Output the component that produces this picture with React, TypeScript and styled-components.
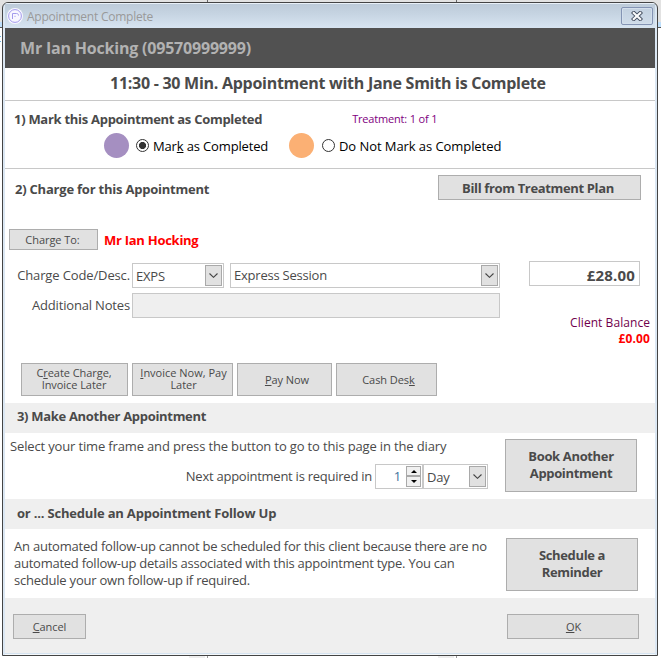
import React from "react";
import styled, { createGlobalStyle, css } from "styled-components";

const GlobalStyle = createGlobalStyle`
  * { box-sizing: border-box; }
  body { margin: 0; background: #fff; overflow: hidden; }
  button, input { font: inherit; color: inherit; letter-spacing: inherit; }
`;

const ink = "#4a4a4a";

/* Grid of the diary page that shows around the dialog's edges */
const Desktop = styled.div`
  width: 661px;
  height: 658px;
  padding: 2px 3px 2px 2px;
  font: 13px/17px "Open Sans", "Noto Sans", sans-serif;
  letter-spacing: -0.22px;
  color: ${ink};
  background:
    linear-gradient(#666, #666) 207px 0 / 1px 2px no-repeat,
    linear-gradient(#666, #666) 456px 0 / 1px 2px no-repeat,
    linear-gradient(#999, #999) 207px 656px / 1px 2px no-repeat,
    linear-gradient(#999, #999) 456px 656px / 1px 2px no-repeat,
    linear-gradient(#eee, #eee) 189px 656px / 16px 2px no-repeat,
    linear-gradient(#eee, #eee) 438px 656px / 16px 2px no-repeat,
    linear-gradient(#6cb8e6, #6cb8e6) 0 36px / 1px 1px no-repeat,
    linear-gradient(#6cb8e6, #6cb8e6) 0 41px / 1px 1px no-repeat,
    linear-gradient(#e2e2e2 0 22px, #bfdffb 22px 27px, #555 27px 28px, #fff 28px);
`;

const Dialog = styled.section`
  display: flex;
  flex-direction: column;
  height: 654px;
  padding: 0 2px 2px;
  border: 1px solid #444;
  border-radius: 6px 6px 0 0;
  background: #dbe7f3;
  overflow: hidden;
`;

const TitleBar = styled.header`
  display: flex;
  align-items: center;
  height: 25px;
  flex: none;
  padding: 0 2px 0 2px;
  background: linear-gradient(#e8f0f8 0 1px, #bdcbd9 1px, #c5d3e1 40%, #d7e4f1);
  font-size: 12px;
  letter-spacing: -0.24px;
  color: #999;
`;

const TitleText = styled.span`
  flex: 1;
  margin: 1px 0 0 4px;
`;

const CloseButton = styled.button`
  display: grid;
  place-items: center;
  width: 32px;
  height: 18px;
  margin: 1px 0 0;
  padding: 0 1px 1px 0;
  border: 1px solid #8494b4;
  border-radius: 2px;
  background: linear-gradient(#c3d1e0, #cfdcea);
  box-shadow: inset 0 0 0 1px #d3dfec;
`;

const ClientBanner = styled.div`
  height: 40px;
  flex: none;
  padding: 10px 15px;
  background: #515151;
  color: #b2b2b2;
  font-size: 16px;
  font-weight: 700;
  line-height: 20px;
  letter-spacing: -0.2px;
`;

const Headline = styled.h1`
  height: 33px;
  flex: none;
  margin: 0;
  padding: 5px 0 0 105px;
  border-bottom: 1px solid #c8c8c8;
  background: #fff;
  font-size: 16px;
  line-height: 20px;
  letter-spacing: -0.27px;
`;

const Panel = styled.div<{ $h: number; $line?: boolean }>`
  height: ${(p) => p.$h}px;
  flex: none;
  background: #fff;
  ${(p) => p.$line && css`border-bottom: 1px solid #c8c8c8;`}
`;

const SectionTitle = styled.h2<{ $track?: number }>`
  margin: 0;
  font-size: 13px;
  line-height: 17px;
  letter-spacing: ${(p) => p.$track ?? -0.24}px;
`;

const Band = styled.div<{ $top?: number }>`
  height: 30px;
  flex: none;
  padding: ${(p) => p.$top ?? 5}px 12px 0;
  background: #efefef;
`;

const Row = styled.div<{ $h: number; $x: number; $top?: number; $gap?: number }>`
  display: flex;
  height: ${(p) => p.$h}px;
  margin-top: ${(p) => p.$top ?? 0}px;
  padding-left: ${(p) => p.$x}px;
  gap: ${(p) => p.$gap ?? 0}px;
`;

const Treatment = styled.div`
  margin-left: 90px;
  color: #800080;
  font-size: 11px;
  line-height: 17px;
  letter-spacing: -0.18px;
`;

const Swatch = styled.span<{ $color: string }>`
  width: 25px;
  height: 25px;
  margin-right: 7px;
  border-radius: 50%;
  background: ${(p) => p.$color};
`;

const Choice = styled.label<{ $w: number; $x?: number }>`
  display: flex;
  align-items: center;
  gap: 4px;
  width: ${(p) => p.$w}px;
  padding-left: ${(p) => p.$x ?? 0}px;
  color: #000;
  letter-spacing: -0.15px;
  white-space: nowrap;
  span { padding-top: 1px; }
`;

const Radio = styled.input`
  appearance: none;
  flex: none;
  width: 13px;
  height: 13px;
  margin: 0;
  border: 1px solid #333;
  border-radius: 50%;
  background: #fff;
  &:checked {
    background: radial-gradient(circle at center, #333 0 3.2px, #fff 3.9px);
  }
`;

const Button = styled.button<{ $w: number; $h: number; $strong?: boolean; $shift?: string }>`
  flex: none;
  width: ${(p) => p.$w}px;
  height: ${(p) => p.$h}px;
  padding: ${(p) => p.$shift ?? "0"};
  border: 1px solid #adadad;
  background: #e1e1e1;
  color: ${ink};
  text-align: center;
  font-size: 11px;
  line-height: 12px;
  letter-spacing: -0.06px;
  ${(p) =>
    p.$strong &&
    css`
      font-size: 13px;
      line-height: 17px;
      font-weight: 700;
      letter-spacing: -0.35px;
    `}
`;

const Key = styled.span`
  text-decoration: underline;
  text-decoration-thickness: 1px;
  text-underline-offset: 1px;
`;

const Payer = styled.strong`
  margin: 3px 0 0 6px;
  color: #f00;
  letter-spacing: -0.27px;
`;

const FieldLabel = styled.label<{ $w: number; $top: number; $gap?: number }>`
  width: ${(p) => p.$w}px;
  padding: ${(p) => p.$top}px ${(p) => p.$gap ?? 2}px 0 0;
  text-align: right;
  white-space: nowrap;
`;

const Field = styled.div<{ $w: number; $muted?: boolean }>`
  display: flex;
  flex: none;
  width: ${(p) => p.$w}px;
  height: 25px;
  padding: 1px;
  border: 1px solid #c8c8c8;
  background: ${(p) => (p.$muted ? "#efefef" : "#fff")};
`;

const Value = styled.span<{ $top: number; $x?: number }>`
  flex: 1;
  padding: ${(p) => p.$top}px 0 0 ${(p) => p.$x ?? 2}px;
`;

const Drop = styled.button`
  display: grid;
  place-items: center;
  flex: none;
  width: 17px;
  height: 21px;
  padding: 0;
  border: 1px solid #a9a9a9;
  background: #e1e1e1;
`;

const Amount = styled.div`
  width: 111px;
  height: 25px;
  margin: -2px 0 0 29px;
  padding: 3px 4px 0 0;
  border: 1px solid #c8c8c8;
  text-align: right;
  font-size: 15px;
  line-height: 20px;
  font-weight: 700;
  letter-spacing: 0.2px;
`;

const Balance = styled.div`
  margin: 2px 5px 0 0;
  color: #70004c;
  text-align: right;
  font-size: 12px;
  line-height: 16px;
  letter-spacing: 0.06px;
  strong {
    display: block;
    color: #f00;
    letter-spacing: 0.15px;
  }
`;

const Split = styled.div<{ $h: number }>`
  display: flex;
  justify-content: space-between;
  height: ${(p) => p.$h}px;
  flex: none;
  background: #fff;
`;

const Copy = styled.div<{ $x: number; $top: number }>`
  padding: ${(p) => p.$top}px 0 0 ${(p) => p.$x}px;
  white-space: nowrap;
`;

const Line = styled.div<{ $track?: number }>`
  letter-spacing: ${(p) => p.$track ?? -0.22}px;
`;

const Aside = styled.div<{ $top: number; $right: number }>`
  padding: ${(p) => p.$top}px ${(p) => p.$right}px 0 0;
`;

const Spin = styled.div`
  display: flex;
  flex-direction: column;
  flex: none;
  width: 15px;
`;

const SpinButton = styled.button<{ $h: number }>`
  display: grid;
  place-items: center;
  height: ${(p) => p.$h}px;
  padding: 0;
  border: 1px solid #a9a9a9;
  background: #f0f0f0;
`;

const Count = styled.span`
  flex: 1;
  padding: 2px 5px 0 0;
  color: #3d729c;
  text-align: right;
`;

const Footer = styled.footer`
  display: flex;
  justify-content: space-between;
  flex: 1;
  padding: 16px 16px 0 8px;
  background: #efefef;
  box-shadow: 0 1px #d5e3f0, 0 2px #f4f8fb;
`;

const Chevron = () => (
  <svg width="9" height="5" viewBox="0 0 9 5" fill="none" stroke="#444" strokeWidth="1.1">
    <path d="M.5.5 4.5 4.3 8.5.5" />
  </svg>
);

const Triangle = ({ down }: { down?: boolean }) => (
  <svg width="6" height="3" viewBox="0 0 6 3">
    <path d={down ? "M0 0h6L3 3z" : "M0 3h6L3 0z"} fill="#000" />
  </svg>
);

const AppLogo = () => (
  <svg width="16" height="16" viewBox="0 0 16 16" fill="none">
    <circle cx="8" cy="8" r="8" fill="#f8f7ff" />
    <circle cx="8" cy="8" r="6.4" stroke="#a29aec" />
    <path d="M5.5 11V5.5h4c1.2 0 2 .6 2 2M8 8.9V7.8" stroke="#a29aec" />
  </svg>
);

const CloseIcon = () => (
  <svg width="12" height="10" viewBox="0 0 12 10">
    <path d="m2.8 2 6.4 6M9.2 2 2.8 8" stroke="#465062" strokeWidth="4" strokeLinecap="square" />
    <path d="m2.8 2 6.4 6M9.2 2 2.8 8" stroke="#fafbfc" strokeWidth="2.2" strokeLinecap="square" />
  </svg>
);

export default function App() {
  return (
    <>
      <GlobalStyle />
      <Desktop>
        <Dialog>
          <TitleBar>
            <AppLogo />
            <TitleText>Appointment Complete</TitleText>
            <CloseButton aria-label="Close"><CloseIcon /></CloseButton>
          </TitleBar>
          <ClientBanner>Mr Ian Hocking (09570999999)</ClientBanner>
          <Headline>11:30 - 30 Min. Appointment with Jane Smith is Complete</Headline>

          <Panel $h={68} $line>
            <Row $h={22} $x={9}>
              <Copy $x={0} $top={10}><SectionTitle $track={-0.28}>1) Mark this Appointment as Completed</SectionTitle></Copy>
              <Copy $x={0} $top={9}><Treatment>Treatment: 1 of 1</Treatment></Copy>
            </Row>
            <Row $h={25} $x={99} $top={10}>
              <Swatch $color="#a58fc1" />
              <Choice $w={153}>
                <Radio type="radio" name="completion" defaultChecked />
                <span>Mar<Key>k</Key> as Completed</span>
              </Choice>
              <Swatch $color="#fbb074" />
              <Choice $w={190} $x={1}>
                <Radio type="radio" name="completion" />
                <Line as="span" $track={-0.07}>Do Not Mark as Completed</Line>
              </Choice>
            </Row>
          </Panel>

          <Panel $h={234}>
            <Split $h={60}>
              <Copy $x={10} $top={12}><SectionTitle $track={-0.22}>2) Charge for this Appointment</SectionTitle></Copy>
              <Aside $top={6} $right={14}>
                <Button $w={203} $h={25} $strong $shift="1px 3px 0 0">Bill from Treatment Plan</Button>
              </Aside>
            </Split>
            <Row $h={21} $x={4}>
              <Button $w={89} $h={21} $shift="0 2px 0 0">Charge To:</Button>
              <Payer>Mr Ian Hocking</Payer>
            </Row>
            <Row $h={25} $x={0} $top={13}>
              <FieldLabel $w={127} $top={4}><Line $track={-0.13}>Charge Code/Desc.</Line></FieldLabel>
              <Field $w={92}>
                <Value $top={3}>EXPS</Value>
                <Drop aria-label="Charge codes"><Chevron /></Drop>
              </Field>
              <Copy $x={6} $top={0}>
                <Field $w={270}>
                  <Value $top={2}>Express Session</Value>
                  <Drop aria-label="Charge descriptions"><Chevron /></Drop>
                </Field>
              </Copy>
              <Amount>£28.00</Amount>
            </Row>
            <Row $h={20} $x={0} $top={5}>
              <FieldLabel $w={127} $top={4}><Line $track={-0.17}>Additional Notes</Line></FieldLabel>
              <Field $w={368} $muted />
            </Row>
            <Balance>Client Balance<strong>£0.00</strong></Balance>
            <Row $h={33} $x={16} $top={16} $gap={4}>
              <Button $w={107} $h={33} $shift="0 1px 2px 0">C<Key>r</Key>eate Charge,<br />Invoice Later</Button>
              <Button $w={101} $h={33} $shift="0 0 2px 2px">
                <Line as="span" $track={0}><Key>I</Key>nvoice Now, Pay</Line><br />Later
              </Button>
              <Button $w={95} $h={33} $shift="0 0 0 5px"><Key>P</Key>ay Now</Button>
              <Button $w={101} $h={33} $shift="0 0 0 4px">Cash Des<Key>k</Key></Button>
            </Row>
          </Panel>

          <Band><SectionTitle $track={-0.31}>3) Make Another Appointment</SectionTitle></Band>
          <Split $h={66}>
            <Copy $x={5} $top={5}>
              <Line $track={-0.15}>Select your time frame and press the button to go to this page in the diary</Line>
              <Row $h={25} $x={0} $top={9}>
                <FieldLabel $w={365} $top={4} $gap={3}><Line $track={-0.25}>Next appointment is required in</Line></FieldLabel>
                <Field $w={48}>
                  <Count>1</Count>
                  <Spin>
                    <SpinButton $h={10} aria-label="More"><Triangle /></SpinButton>
                    <SpinButton $h={11} aria-label="Fewer"><Triangle down /></SpinButton>
                  </Spin>
                </Field>
                <Field $w={65}>
                  <Value $top={3}>Day</Value>
                  <Drop aria-label="Time units"><Chevron /></Drop>
                </Field>
              </Row>
            </Copy>
            <Aside $top={6} $right={18}>
              <Button $w={132} $h={53} $strong $shift="0 0 2px 0">Book Another<br />Appointment</Button>
            </Aside>
          </Split>

          <Band $top={6}><SectionTitle $track={-0.19}>or ... Schedule an Appointment Follow Up</SectionTitle></Band>
          <Split $h={69}>
            <Copy $x={9} $top={9}>
              <Line>An automated follow-up cannot be scheduled for this client because there are no</Line>
              <Line $track={-0.25}>automated follow-up details associated with this appointment type. You can</Line>
              <Line>schedule your own follow-up if required.</Line>
            </Copy>
            <Aside $top={9} $right={17}>
              <Button $w={132} $h={53} $strong $shift="0 0 2px 0">Schedule a<br />Reminder</Button>
            </Aside>
          </Split>

          <Footer>
            <Button $w={73} $h={25}><Key>C</Key>ancel</Button>
            <Button $w={132} $h={25} $shift="0 0 0 1px"><Key>O</Key>K</Button>
          </Footer>
        </Dialog>
      </Desktop>
    </>
  );
}
